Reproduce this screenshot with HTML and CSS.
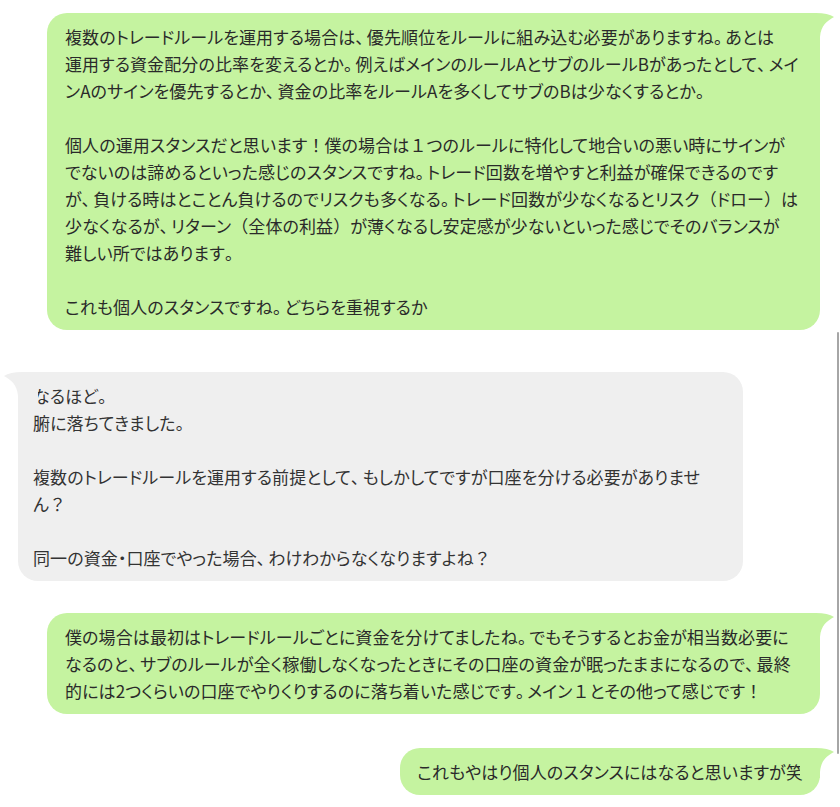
FILE: index.html
```html
<!DOCTYPE html>
<html lang="ja">
<head>
    <meta charset="UTF-8">
    <meta name="viewport" content="width=device-width, initial-scale=1.0">
    <title>トーク</title>
    <link rel="stylesheet" href="styles.css">
</head>
<body>
    <div class="talk">
        <div class="bubble mine first">
            <svg class="tail" viewBox="0 0 36 30" width="36" height="30"><path d="M0,0 H16 Q28,0 34,4 C27,8 21,12 20,24 V30 H0 Z"/></svg>
            <p>複数のトレードルールを運用する場合は<i>、</i>優先順位をルールに組み込む必要がありますね<i>。</i>あとは<br>運用する資金配分の比率を変えるとか<i>。</i>例えばメインのルールAとサブのルールBがあったとして<i>、</i>メイ<br>ンAのサインを優先するとか<i>、</i>資金の比率をルールAを多くしてサブのBは少なくするとか<i>。</i><br><br>個人の運用スタンスだと思います<b>！</b>僕の場合は<b>１</b>つのルールに特化して地合いの悪い時にサインが<br>でないのは諦めるといった感じのスタンスですね<i>。</i>トレード回数を増やすと利益が確保できるのです<br>が<i>、</i>負ける時はとことん負けるのでリスクも多くなる<i>。</i>トレード回数が少なくなるとリスク<b>（</b>ドロー<b>）</b>は<br>少なくなるが<i>、</i>リターン<b>（</b>全体の利益<b>）</b>が薄くなるし安定感が少ないといった感じでそのバランスが<br>難しい所ではあります<i>。</i><br><br>これも個人のスタンスですね<i>。</i>どちらを重視するか</p>
        </div>

        <div class="bubble theirs">
            <svg class="tail" viewBox="0 0 36 30" width="36" height="30"><path d="M0,0 H16 Q28,0 34,4 C27,8 21,12 20,24 V30 H0 Z"/></svg>
            <p>なるほど<i>。</i><br>腑に落ちてきました<i>。</i><br><br>複数のトレードルールを運用する前提として<i>、</i>もしかしてですが口座を分ける必要がありませ<br>ん<b>？</b><br><br>同一の資金・口座でやった場合<i>、</i>わけわからなくなりますよね<b>？</b></p>
        </div>

        <div class="bubble mine third">
            <svg class="tail" viewBox="0 0 36 30" width="36" height="30"><path d="M0,0 H16 Q28,0 34,4 C27,8 21,12 20,24 V30 H0 Z"/></svg>
            <p>僕の場合は最初はトレードルールごとに資金を分けてましたね<i>。</i>でもそうするとお金が相当数必要に<br>なるのと<i>、</i>サブのルールが全く稼働しなくなったときにその口座の資金が眠ったままになるので<i>、</i>最終<br>的には2つくらいの口座でやりくりするのに落ち着いた感じです<i>。</i>メイン<b>１</b>とその他って感じです<b>！</b></p>
        </div>

        <div class="bubble mine short">
            <svg class="tail" viewBox="0 0 36 30" width="36" height="30"><path d="M0,0 H16 Q28,0 34,4 C27,8 21,12 20,24 V30 H0 Z"/></svg>
            <p>これもやはり個人のスタンスにはなると思いますが笑</p>
        </div>
    </div>
    <div class="scroll-edge"></div>
</body>
</html>
```

FILE: styles.css
```css
/* 全体 */
body {
    margin: 0;
    background: #ffffff;
    font-family: "Noto Sans CJK JP", "Noto Sans", sans-serif;
    color: #2a2a2a;
}

.talk {
    display: flex;
    flex-direction: column;
    padding: 13px 0 0;
}

/* 吹き出し */
.bubble {
    position: relative;
    border-radius: 20px;
    padding: 10px 16px;
}

.bubble p {
    margin: 0;
    font-size: 17px;
    line-height: 27px;
    letter-spacing: 0.1px;
    white-space: nowrap;
    font-feature-settings: "palt";
}

/* 句読点は少しだけ広め */
.bubble p i {
    font-style: normal;
    letter-spacing: 3px;
}

/* 全角記号はそのままの幅 */
.bubble p b {
    font-weight: normal;
    font-feature-settings: normal;
}

.tail {
    position: absolute;
    top: 0;
    display: block;
}

/* 自分（緑） */
.mine {
    align-self: flex-end;
    margin-right: 20px;
    background: #c5f3a0;
    padding-left: 18px;
}

.mine .tail {
    right: -16px;
    fill: #c5f3a0;
}

.first {
    width: 739px;
}

.third {
    width: 739px;
    margin-top: 32px;
}

.short {
    margin-top: 34px;
    padding-left: 17px;
    padding-right: 17px;
}

/* 相手（グレー） */
.theirs {
    align-self: flex-start;
    margin-left: 18px;
    margin-top: 42px;
    width: 694px;
    background: #efefef;
    padding-left: 15px;
    color: #333333;
}

.theirs .tail {
    left: -16px;
    fill: #efefef;
    transform: scaleX(-1);
}

.scroll-edge {
    position: absolute;
    top: 332px;
    right: 1px;
    width: 2px;
    height: 422px;
    background: #a6a6a6;
    border-radius: 1px;
}
```
